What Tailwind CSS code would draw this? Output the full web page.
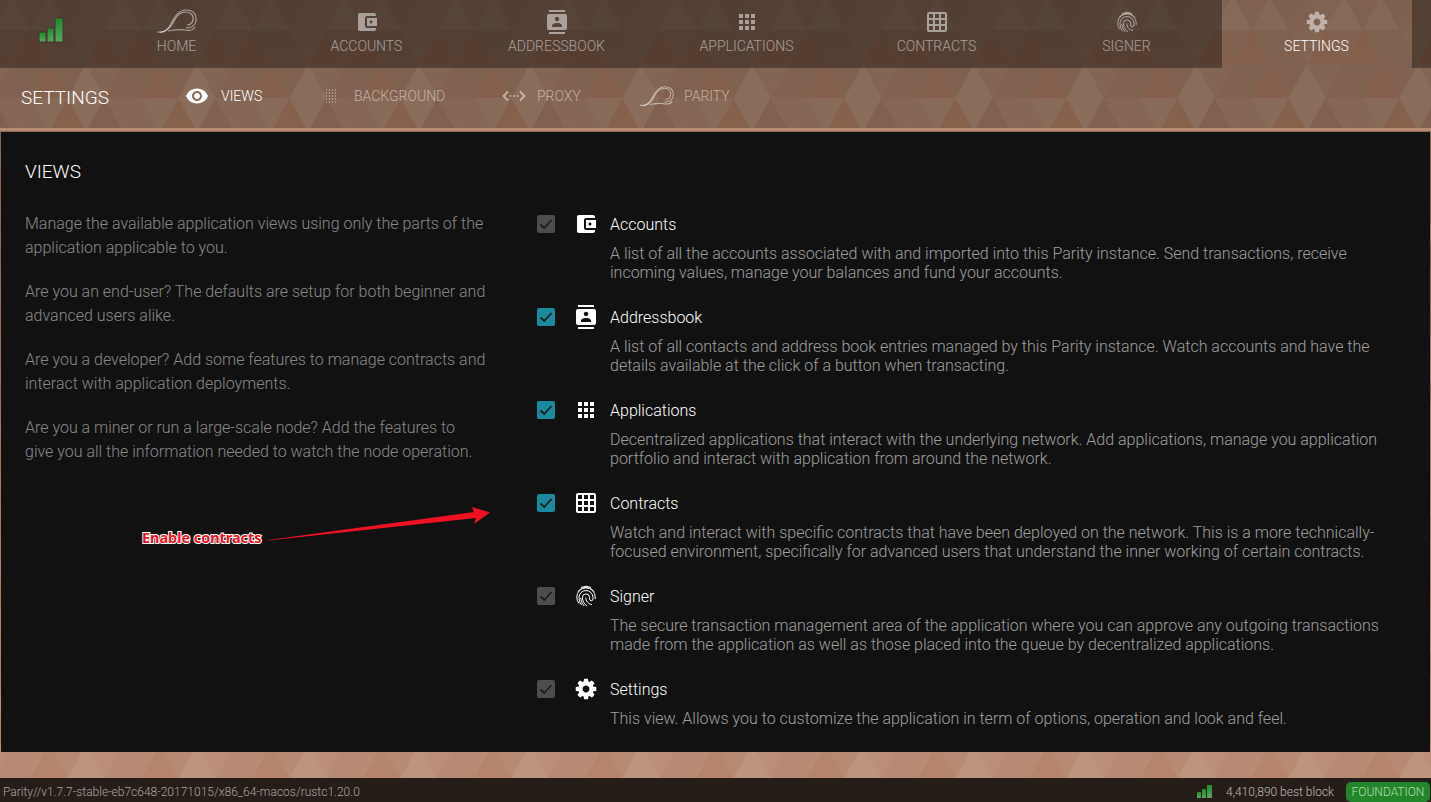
<!DOCTYPE html>
<html lang="en">
<head>
    <meta charset="UTF-8">
    <title>Parity - Settings</title>
    <script src="https://cdn.jsdelivr.net/npm/@tailwindcss/browser@4"></script>
</head>
<body class="font-['Roboto',sans-serif] font-light">
    <div class="relative flex flex-col h-[802px] w-full overflow-hidden bg-[linear-gradient(#80614f_0px,#846452_130px,#b98d75_750px)]">
        <!-- triangle background -->
        <svg class="absolute inset-0 w-full h-full" xmlns="http://www.w3.org/2000/svg">
            <defs><pattern id="tri" x="12" y="-4" width="111" height="136" patternUnits="userSpaceOnUse"></pattern></defs>
            <rect width="100%" height="100%" fill="url(#tri)"></rect>
        </svg>

        <!-- top nav -->
        <header class="relative flex h-[68px] text-[14px] text-white/50">
            <div class="w-[81.5px] bg-black/35 flex">
                <svg class="ml-[38px] mt-[17px] w-[26px] h-[26px]" viewBox="0 0 26 26">
                    <defs><linearGradient id="bar" x1="0" y1="0" x2="0" y2="1"><stop offset="0" stop-color="#1f8a2c"></stop><stop offset="1" stop-color="#5aa85f"></stop></linearGradient></defs>
                    <g stroke="#44352c" stroke-width="1" fill="url(#bar)">
                        <rect x="1" y="15" width="7" height="10"></rect><rect x="9" y="11" width="7" height="14"></rect><rect x="17" y="1" width="8" height="24"></rect>
                    </g>
                </svg>
            </div>
            <a class="w-[190px] bg-black/35 flex flex-col items-center pt-[9px]">
                <svg class="w-[40px] h-[24px] text-white/50" viewBox="0 0 40 24" fill="none" stroke="currentColor" stroke-width="1.2">
                    <path d="M0 23C7 24 11 21 14 15C17 8 21 1 29 1C36 1 40 5 39 12C38 17 34 19 29 19"></path>
                    <path d="M3 23.5C10 23 14 18 17 12C20 6 24 3 29 3C34 3 37 7 36 11C35 15 32 16 30 16"></path>
                    <path d="M11 22C18 21 22 20 28 21C32 22 36 21 38 18"></path>
                </svg>
                <span class="mt-[5px] leading-[16px]">HOME</span>
            </a>
            <a class="w-[190px] bg-black/35 flex flex-col items-center pt-[10px]">
                <svg class="w-[24px] h-[24px]" viewBox="0 0 24 24" fill="currentColor"><path d="M21 18v1c0 1.1-.9 2-2 2H5c-1.11 0-2-.9-2-2V5c0-1.1.89-2 2-2h14c1.1 0 2 .9 2 2v1h-9c-1.11 0-2 .9-2 2v8c0 1.1.89 2 2 2h9zm-9-2h10V8H12v8zm4-2.5c-.83 0-1.5-.67-1.5-1.5s.67-1.5 1.5-1.5 1.5.67 1.5 1.5-.67 1.5-1.5 1.5z"></path></svg>
                <span class="mt-[4px] leading-[16px]">ACCOUNTS</span>
            </a>
            <a class="w-[190px] bg-black/35 flex flex-col items-center pt-[10px]">
                <svg class="w-[24px] h-[24px]" viewBox="0 0 24 24" fill="currentColor"><path d="M20 0H4v2h16V0zM4 24h16v-2H4v2zM20 4H4c-1.1 0-2 .9-2 2v12c0 1.1.9 2 2 2h16c1.1 0 2-.9 2-2V6c0-1.1-.9-2-2-2zm-8 2.75c1.24 0 2.25 1.01 2.25 2.25s-1.01 2.25-2.25 2.25S9.75 10.24 9.75 9 10.76 6.75 12 6.75zM17 17H7v-1.5c0-1.67 3.33-2.5 5-2.5s5 .83 5 2.5V17z"></path></svg>
                <span class="mt-[4px] leading-[16px]">ADDRESSBOOK</span>
            </a>
            <a class="w-[190px] bg-black/35 flex flex-col items-center pt-[10px]">
                <svg class="w-[24px] h-[24px]" viewBox="0 0 24 24" fill="currentColor"><path d="M4 8h4V4H4v4zm6 12h4v-4h-4v4zm-6 0h4v-4H4v4zm0-6h4v-4H4v4zm6 0h4v-4h-4v4zm6-10v4h4V4h-4zm-6 4h4V4h-4v4zm6 6h4v-4h-4v4zm0 6h4v-4h-4v4z"></path></svg>
                <span class="mt-[4px] leading-[16px]">APPLICATIONS</span>
            </a>
            <a class="w-[190px] bg-black/35 flex flex-col items-center pt-[10px]">
                <svg class="w-[24px] h-[24px]" viewBox="0 0 24 24" fill="currentColor"><path d="M20 2H4c-1.1 0-2 .9-2 2v16c0 1.1.9 2 2 2h16c1.1 0 2-.9 2-2V4c0-1.1-.9-2-2-2zM8 20H4v-4h4v4zm0-6H4v-4h4v4zm0-6H4V4h4v4zm6 12h-4v-4h4v4zm0-6h-4v-4h4v4zm0-6h-4V4h4v4zm6 12h-4v-4h4v4zm0-6h-4v-4h4v4zm0-6h-4V4h4v4z"></path></svg>
                <span class="mt-[4px] leading-[16px]">CONTRACTS</span>
            </a>
            <a class="w-[190px] bg-black/35 flex flex-col items-center pt-[10px]">
                <svg class="w-[24px] h-[24px]" viewBox="0 0 24 24" fill="none" stroke="currentColor" stroke-width="1">
                    <path d="M7 3.5A10.5 10.5 0 0 1 17 3.5"></path>
                    <path d="M4 7.5A10 10 0 0 1 20 7.5"></path>
                    <path d="M5 19.5A10 10 0 0 1 2.8 13A9.2 9.2 0 0 1 21.2 13V15"></path>
                    <path d="M7.5 21A11 11 0 0 1 5 13.5A7 7 0 0 1 19 13.5V15A1.7 1.7 0 0 1 15.6 15V13.5A3.6 3.6 0 0 0 8.4 13.5C8.4 17 10 20 13 22"></path>
                    <path d="M11.8 13.5C11.8 17 14 20 18 20.5"></path>
                    <path d="M10.2 22C7.5 19 6.8 16 6.8 13.8"></path>
                </svg>
                <span class="mt-[4px] leading-[16px]">SIGNER</span>
            </a>
            <a class="w-[190px] flex flex-col items-center pt-[10px] text-white">
                <svg class="w-[24px] h-[24px] text-white/50" viewBox="0 0 1792 1792" fill="currentColor"><path d="M1152 896q0-106-75-181t-181-75-181 75-75 181 75 181 181 75 181-75 75-181zm512-109v222q0 12-8 23t-20 13l-185 28q-19 54-39 91 35 50 107 138 10 12 10 25t-9 23q-27 37-99 108t-94 71q-12 0-26-9l-138-108q-44 23-91 38-16 136-29 186-7 28-36 28h-222q-14 0-24.5-8.5t-11.5-21.5l-28-184q-49-16-90-37l-141 107q-10 9-25 9-14 0-25-11-126-114-165-168-7-10-7-23 0-12 8-23 15-21 51-66.5t54-70.5q-27-50-41-99l-183-27q-13-2-21-12.5t-8-23.5v-222q0-12 8-23t19-13l186-28q14-46 39-92-40-57-107-138-10-12-10-24 0-10 9-23 26-36 98.5-107.5t94.5-71.5q13 0 26 10l138 107q44-23 91-38 16-136 29-186 7-28 36-28h222q14 0 24.5 8.5t11.5 21.5l28 184q49 16 90 37l142-107q9-9 24-9 13 0 25 10 129 119 165 170 7 8 7 22 0 12-8 23-15 21-51 66.5t-54 70.5q26 50 41 98l183 28q13 2 21 12.5t8 23.5z"></path></svg>
                <span class="mt-[4px] leading-[16px]">SETTINGS</span>
            </a>
            <div class="flex-1 bg-black/35"></div>
        </header>

        <!-- settings sub nav -->
        <nav class="relative flex items-center h-[60px] pb-[4px] text-[14px] text-white/50">
            <h2 class="ml-[21px] mt-[4px] w-[165px] text-[19px] text-white">SETTINGS</h2>
            <a class="flex items-center w-[136px] text-white">
                <svg class="w-[24px] h-[24px] mr-[12px] -ml-[1px]" viewBox="0 0 24 24" fill="currentColor"><path d="M12 4.5C7 4.5 2.73 7.61 1 12c1.73 4.39 6 7.5 11 7.5s9.27-3.11 11-7.5c-1.73-4.39-6-7.5-11-7.5zM12 17c-2.76 0-5-2.24-5-5s2.24-5 5-5 5 2.24 5 5-2.24 5-5 5zm0-8c-1.66 0-3 1.34-3 3s1.34 3 3 3 3-1.34 3-3-1.34-3-3-3z"></path></svg>
                VIEWS
            </a>
            <a class="flex items-center w-[180px]">
                <svg class="w-[16px] h-[16px] mr-[16px]" viewBox="0 0 16 16" fill="currentColor">
                    <g opacity=".6"><circle cx="1.5" cy="5" r=".6"></circle><circle cx="1.5" cy="8" r=".6"></circle><circle cx="1.5" cy="11" r=".6"></circle></g>
                    <circle cx="4.5" cy="2" r=".6"></circle><circle cx="7.5" cy="2" r=".7"></circle><circle cx="10.5" cy="2" r=".7"></circle><circle cx="13.5" cy="2" r=".7"></circle>
                    <circle cx="4.5" cy="5" r=".7"></circle><circle cx="7.5" cy="5" r=".8"></circle><circle cx="10.5" cy="5" r=".8"></circle><circle cx="13.5" cy="5" r=".8"></circle>
                    <circle cx="4.5" cy="8" r=".7"></circle><circle cx="7.5" cy="8" r=".8"></circle><circle cx="10.5" cy="8" r=".8"></circle><circle cx="13.5" cy="8" r=".8"></circle>
                    <circle cx="4.5" cy="11" r=".7"></circle><circle cx="7.5" cy="11" r=".8"></circle><circle cx="10.5" cy="11" r=".8"></circle><circle cx="13.5" cy="11" r=".8"></circle>
                    <circle cx="4.5" cy="14" r=".6"></circle><circle cx="7.5" cy="14" r=".7"></circle><circle cx="10.5" cy="14" r=".7"></circle><circle cx="13.5" cy="14" r=".7"></circle>
                </svg>
                BACKGROUND
            </a>
            <a class="flex items-center w-[138px]">
                <svg class="w-[24px] h-[24px] mr-[11px]" viewBox="0 0 24 24" fill="none" stroke="currentColor" stroke-width="1.8">
                    <path d="M6 7.5L1.5 12L6 16.5"></path><path d="M18 7.5L22.5 12L18 16.5"></path>
                    <g fill="currentColor" stroke="none"><circle cx="8.5" cy="12" r="1"></circle><circle cx="12" cy="12" r="1"></circle><circle cx="15.5" cy="12" r="1"></circle></g>
                </svg>
                PROXY
            </a>
            <a class="flex items-center">
                <svg class="w-[34px] h-[22px] mr-[10px]" viewBox="0 0 40 24" fill="none" stroke="currentColor" stroke-width="1.2">
                    <path d="M0 23C7 24 11 21 14 15C17 8 21 1 29 1C36 1 40 5 39 12C38 17 34 19 29 19"></path>
                    <path d="M3 23.5C10 23 14 18 17 12C20 6 24 3 29 3C34 3 37 7 36 11C35 15 32 16 30 16"></path>
                    <path d="M11 22C18 21 22 20 28 21C32 22 36 21 38 18"></path>
                </svg>
                PARITY
            </a>
        </nav>

        <div class="relative h-[4px] bg-[#b88a72] border-b border-[#8a6a58]"></div>

        <!-- views panel -->
        <main class="relative mx-[1px] h-[620px] bg-[#111111] px-[24px] pt-[28px]">
            <h3 class="text-[19px] leading-[24px] text-white">VIEWS</h3>
            <div class="flex mt-[28px]">
                <div class="w-[512px] text-[16px] leading-[24px] text-white/50">
                    <p class="w-[462px]">Manage the available application views using only the parts of the application applicable to you.</p>
                    <p class="w-[462px] mt-[20px]">Are you an end-user? The defaults are setup for both beginner and advanced users alike.</p>
                    <p class="w-[462px] mt-[20px]">Are you a developer? Add some features to manage contracts and interact with application deployments.</p>
                    <p class="w-[462px] mt-[20px]">Are you a miner or run a large-scale node? Add the features to give you all the information needed to watch the node operation.</p>
                </div>
                <div class="flex-1 pt-[1px]" id="views"></div>
            </div>
        </main>

        <div class="relative h-[26px]"></div>

        <!-- status bar -->
        <footer class="relative flex items-center h-[24px] pt-[3px] bg-[#261c18] text-[12px] text-white/60">
            <span class="ml-[3px] flex-1">Parity//v1.7.7-stable-eb7c648-20171015/x86_64-macos/rustc1.20.0</span>
            <svg class="w-[15px] h-[13px] mr-[14px]" viewBox="0 0 15 13">
                <g fill="url(#bar)"><rect x="0" y="7" width="4" height="6"></rect><rect x="5" y="4" width="4" height="9"></rect><rect x="10" y="0" width="5" height="13"></rect></g>
            </svg>
            <span class="mr-[12px] text-white/70">4,410,890 best block</span>
            <span class="mr-[1px] flex items-center justify-center w-[84px] h-[20px] rounded-[5px] bg-[#22862a] text-[#b9dcb4]">FOUNDATION</span>
        </footer>

        <!-- screenshot annotation -->
        <svg class="absolute inset-0 w-full h-full pointer-events-none" xmlns="http://www.w3.org/2000/svg">
            <polygon points="268,540 268,540.6 476,518 474,524 490,512.5 472,507 474,512" fill="#ee1122"></polygon>
        </svg>
        <span class="absolute left-[142px] top-[528px] text-[14.4px] leading-[20px] font-bold font-['Noto_Sans',sans-serif] text-[#ee1122] [-webkit-text-stroke:2px_white] [paint-order:stroke_fill]">Enable contracts</span>
    </div>

    <script>
        // triangle tile: each row is up, down, up, down, up, down. plus = lighter, minus = darker, w = warm
        const rows = [
            [.05, .0, .035, -.01, .0, .01],
            ['w', -.01, -.01, .01, 'w', .0],
            [-.015, -.01, 'w', -.02, .06, .01],
            [.02, .045, 'w', .06, -.04, .02]
        ];
        let tile = '';
        rows.forEach((row, r) => {
            const y = r * 34, off = r % 2 ? 18.5 : 0;
            row.forEach((a, i) => {
                const k = Math.floor(i / 2), isUp = i % 2 === 0;
                const fill = a === 'w' ? 'rgba(150,75,40,.13)' : a > 0 ? `rgba(255,255,255,${a})` : `rgba(40,10,0,${-a})`;
                for (const s of [-111, 0, 111]) {
                    const x = k * 37 + off + s;
                    const pts = isUp
                        ? `${x},${y} ${x + 18.5},${y + 34} ${x - 18.5},${y + 34}`
                        : `${x},${y} ${x + 37},${y} ${x + 18.5},${y + 34}`;
                    tile += `<polygon points="${pts}" fill="${fill}"></polygon>`;
                }
            });
        });
        document.getElementById('tri').innerHTML = tile;

        const icons = {
            wallet: '<svg class="w-[24px] h-[24px]" viewBox="0 0 24 24" fill="currentColor"><path d="M21 18v1c0 1.1-.9 2-2 2H5c-1.11 0-2-.9-2-2V5c0-1.1.89-2 2-2h14c1.1 0 2 .9 2 2v1h-9c-1.11 0-2 .9-2 2v8c0 1.1.89 2 2 2h9zm-9-2h10V8H12v8zm4-2.5c-.83 0-1.5-.67-1.5-1.5s.67-1.5 1.5-1.5 1.5.67 1.5 1.5-.67 1.5-1.5 1.5z"></path></svg>',
            contacts: '<svg class="w-[24px] h-[24px]" viewBox="0 0 24 24" fill="currentColor"><path d="M20 0H4v2h16V0zM4 24h16v-2H4v2zM20 4H4c-1.1 0-2 .9-2 2v12c0 1.1.9 2 2 2h16c1.1 0 2-.9 2-2V6c0-1.1-.9-2-2-2zm-8 2.75c1.24 0 2.25 1.01 2.25 2.25s-1.01 2.25-2.25 2.25S9.75 10.24 9.75 9 10.76 6.75 12 6.75zM17 17H7v-1.5c0-1.67 3.33-2.5 5-2.5s5 .83 5 2.5V17z"></path></svg>',
            apps: '<svg class="w-[24px] h-[24px]" viewBox="0 0 24 24" fill="currentColor"><path d="M4 8h4V4H4v4zm6 12h4v-4h-4v4zm-6 0h4v-4H4v4zm0-6h4v-4H4v4zm6 0h4v-4h-4v4zm6-10v4h4V4h-4zm-6 4h4V4h-4v4zm6 6h4v-4h-4v4zm0 6h4v-4h-4v4z"></path></svg>',
            grid: '<svg class="w-[24px] h-[24px]" viewBox="0 0 24 24" fill="currentColor"><path d="M20 2H4c-1.1 0-2 .9-2 2v16c0 1.1.9 2 2 2h16c1.1 0 2-.9 2-2V4c0-1.1-.9-2-2-2zM8 20H4v-4h4v4zm0-6H4v-4h4v4zm0-6H4V4h4v4zm6 12h-4v-4h4v4zm0-6h-4v-4h4v4zm0-6h-4V4h4v4zm6 12h-4v-4h4v4zm0-6h-4v-4h4v4zm0-6h-4V4h4v4z"></path></svg>',
            finger: '<svg class="w-[24px] h-[24px]" viewBox="0 0 24 24" fill="none" stroke="currentColor" stroke-width="1"><path d="M7 3.5A10.5 10.5 0 0 1 17 3.5"></path><path d="M4 7.5A10 10 0 0 1 20 7.5"></path><path d="M5 19.5A10 10 0 0 1 2.8 13A9.2 9.2 0 0 1 21.2 13V15"></path><path d="M7.5 21A11 11 0 0 1 5 13.5A7 7 0 0 1 19 13.5V15A1.7 1.7 0 0 1 15.6 15V13.5A3.6 3.6 0 0 0 8.4 13.5C8.4 17 10 20 13 22"></path><path d="M11.8 13.5C11.8 17 14 20 18 20.5"></path><path d="M10.2 22C7.5 19 6.8 16 6.8 13.8"></path></svg>',
            gear: '<svg class="w-[24px] h-[24px]" viewBox="0 0 1792 1792" fill="currentColor"><path d="M1152 896q0-106-75-181t-181-75-181 75-75 181 75 181 181 75 181-75 75-181zm512-109v222q0 12-8 23t-20 13l-185 28q-19 54-39 91 35 50 107 138 10 12 10 25t-9 23q-27 37-99 108t-94 71q-12 0-26-9l-138-108q-44 23-91 38-16 136-29 186-7 28-36 28h-222q-14 0-24.5-8.5t-11.5-21.5l-28-184q-49-16-90-37l-141 107q-10 9-25 9-14 0-25-11-126-114-165-168-7-10-7-23 0-12 8-23 15-21 51-66.5t54-70.5q-27-50-41-99l-183-27q-13-2-21-12.5t-8-23.5v-222q0-12 8-23t19-13l186-28q14-46 39-92-40-57-107-138-10-12-10-24 0-10 9-23 26-36 98.5-107.5t94.5-71.5q13 0 26 10l138 107q44-23 91-38 16-136 29-186 7-28 36-28h222q14 0 24.5 8.5t11.5 21.5l28 184q49 16 90 37l142-107q9-9 24-9 13 0 25 10 129 119 165 170 7 8 7 22 0 12-8 23-15 21-51 66.5t-54 70.5q26 50 41 98l183 28q13 2 21 12.5t8 23.5z"></path></svg>'
        };

        const views = [
            { name: 'Accounts', icon: icons.wallet, on: false, text: 'A list of all the accounts associated with and imported into this Parity instance. Send transactions, receive incoming values, manage your balances and fund your accounts.' },
            { name: 'Addressbook', icon: icons.contacts, on: true, text: 'A list of all contacts and address book entries managed by this Parity instance. Watch accounts and have the details available at the click of a button when transacting.' },
            { name: 'Applications', icon: icons.apps, on: true, text: 'Decentralized applications that interact with the underlying network. Add applications, manage you application portfolio and interact with application from around the network.' },
            { name: 'Contracts', icon: icons.grid, on: true, text: 'Watch and interact with specific contracts that have been deployed on the network. This is a more technically-focused environment, specifically for advanced users that understand the inner working of certain contracts.' },
            { name: 'Signer', icon: icons.finger, on: false, text: 'The secure transaction management area of the application where you can approve any outgoing transactions made from the application as well as those placed into the queue by decentralized applications.' },
            { name: 'Settings', icon: icons.gear, on: false, text: 'This view. Allows you to customize the application in term of options, operation and look and feel.' }
        ];

        document.getElementById('views').innerHTML = views.map(v => `
            <div class="flex h-[93px]">
                <span class="mt-[2px] w-[18px] h-[18px] rounded-[2px] flex items-center justify-center ${v.on ? 'bg-[#1b8a9e]' : 'bg-[#4d4d4d]'}">
                    <svg class="w-[14px] h-[14px]" viewBox="0 0 14 14" fill="none" stroke="#1c1c1c" stroke-width="1.8"><path d="M1.5 7.5L5.2 11L12.5 3"></path></svg>
                </span>
                <span class="ml-[19px] -mt-[1px] w-[24px] h-[24px] text-white">${v.icon}</span>
                <div class="ml-[12px] flex-1">
                    <div class="text-[16px] leading-[24px] text-white">${v.name}</div>
                    <p class="mt-[7px] w-[775px] text-[16px] leading-[19px] text-white/60">${v.text}</p>
                </div>
            </div>`).join('');
    </script>
</body>
</html>
